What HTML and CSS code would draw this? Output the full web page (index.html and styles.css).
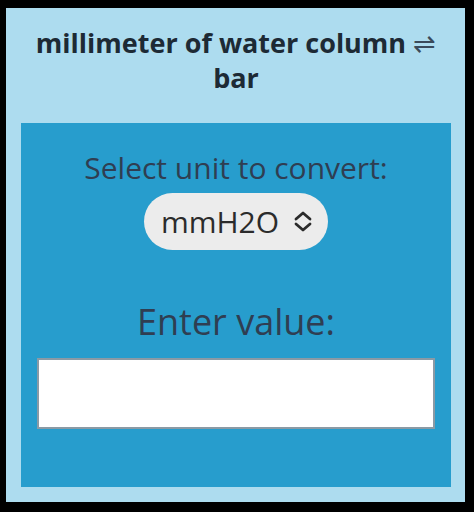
FILE: index.html
```html
<!DOCTYPE html>
<html lang="en">
<head>
    <meta charset="UTF-8">
    <meta name="viewport" content="width=device-width, initial-scale=1.0">
    <title>mmH2O to bar</title>
    <link rel="stylesheet" href="styles.css">
</head>
<body>

    <div class="card">
        <h2 class="title">millimeter of water column <span class="swap">&#8652;</span> bar</h2>

        <div class="converter">
            <p class="label">Select unit to convert:</p>
            <div class="unit">
                <span>mmH2O</span>
                <svg class="chevrons" width="20" height="21" viewBox="0 0 20 21">
                    <path d="M3 8 L10 2 L17 8 M3 13 L10 19 L17 13" fill="none" stroke="#2b2b2b" stroke-width="2.8" stroke-linecap="round" stroke-linejoin="round"/>
                </svg>
            </div>

            <p class="label big">Enter value:</p>
            <input class="value" type="text">
        </div>
    </div>

</body>
</html>
```

FILE: styles.css
```css
body {
    background-color: #000;
    margin: 0;
    font-family: "Open Sans", sans-serif;
}

.card {
    margin: 8px 9px 10px 6px;
    height: 494px;
    box-sizing: border-box;
    background-color: #addcef;
    padding: 0 14px 15px 15px;
    display: flex;
    flex-direction: column;
}

.title {
    margin: 0;
    padding: 17px 0 0;
    height: 115px;
    box-sizing: border-box;
    text-align: center;
    font-size: 27px;
    line-height: 35px;
    font-weight: 700;
    color: #1d2a35;
}

.swap {
    font-weight: 400;
    color: #3a4a5a;
}

.converter {
    flex: 1;
    background-color: #279dcd;
    display: flex;
    flex-direction: column;
    align-items: center;
    padding: 25px 16px 0;
}

.label {
    margin: 0;
    font-size: 30px;
    line-height: 40px;
    color: #2f3e52;
}

.big {
    margin-top: 48px;
    font-size: 36px;
    line-height: 48px;
}

.unit {
    margin-top: 5px;
    display: flex;
    align-items: center;
    gap: 14px;
    height: 57px;
    padding: 0 15px 0 17px;
    border-radius: 29px;
    background-color: #ececec;
    font-size: 30px;
    color: #2b2b2b;
}

.value {
    margin-top: 12px;
    width: 398px;
    height: 71px;
    box-sizing: border-box;
    border: 2px solid #8a9aa5;
    background-color: #fff;
}
```
